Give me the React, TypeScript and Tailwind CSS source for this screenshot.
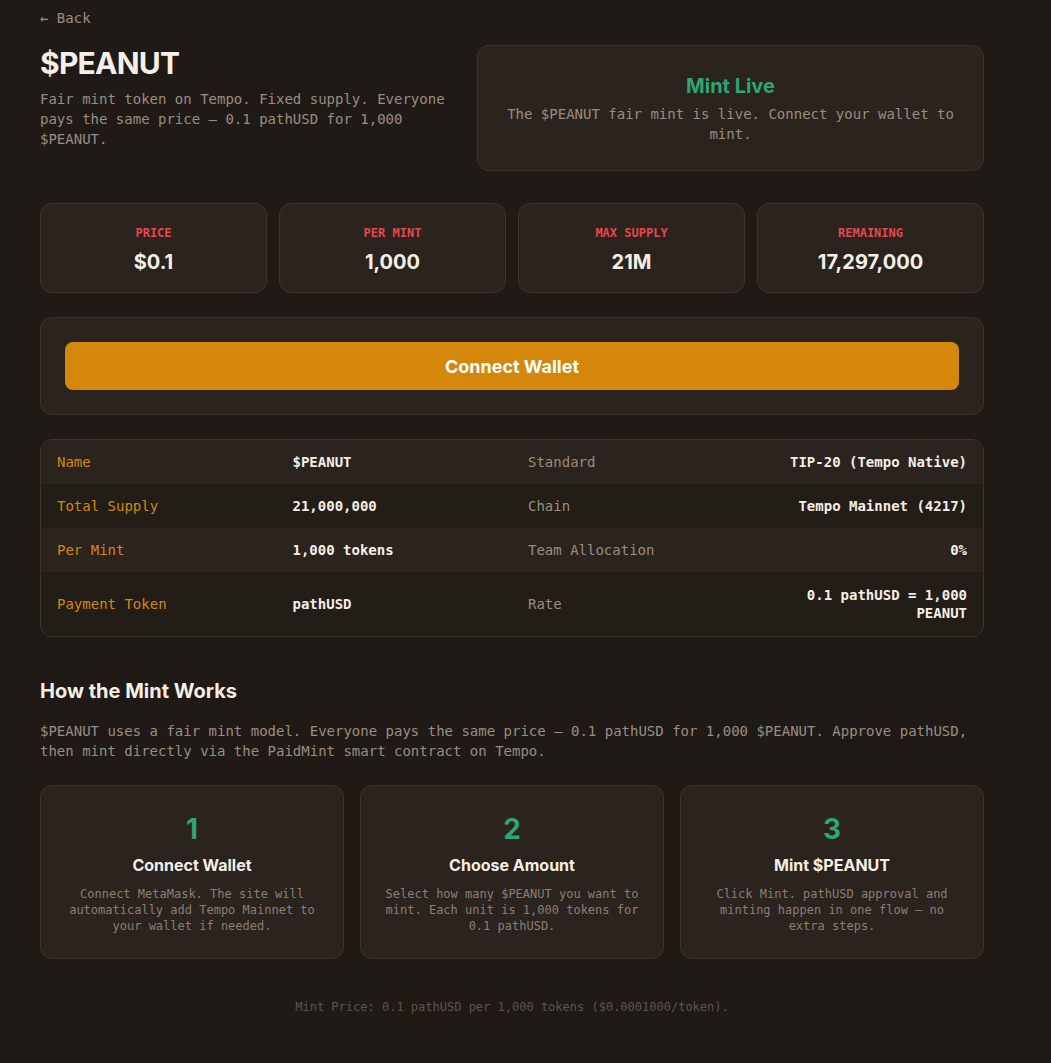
const mono = { fontFamily: '"DejaVu Sans Mono", "Liberation Mono", monospace' }

const stats = [
  { label: 'Price', value: '$0.1' },
  { label: 'Per Mint', value: '1,000' },
  { label: 'Max Supply', value: '21M' },
  { label: 'Remaining', value: '17,297,000' },
]

const rows = [
  { k1: 'Name', v1: '$PEANUT', k2: 'Standard', v2: 'TIP-20 (Tempo Native)' },
  { k1: 'Total Supply', v1: '21,000,000', k2: 'Chain', v2: 'Tempo Mainnet (4217)' },
  { k1: 'Per Mint', v1: '1,000 tokens', k2: 'Team Allocation', v2: '0%' },
  { k1: 'Payment Token', v1: 'pathUSD', k2: 'Rate', v2: '0.1 pathUSD = 1,000 PEANUT' },
]

const steps = [
  {
    n: '1',
    title: 'Connect Wallet',
    text: 'Connect MetaMask. The site will automatically add Tempo Mainnet to your wallet if needed.',
  },
  {
    n: '2',
    title: 'Choose Amount',
    text: 'Select how many $PEANUT you want to mint. Each unit is 1,000 tokens for 0.1 pathUSD.',
  },
  {
    n: '3',
    title: 'Mint $PEANUT',
    text: 'Click Mint. pathUSD approval and minting happen in one flow — no extra steps.',
  },
]

export default function App() {
  return (
    <div
      className="min-h-[1063px] w-full bg-[#1f1a16] text-[#f2ece4]"
      style={{ fontFamily: 'Inter, "Noto Sans", sans-serif' }}
    >
      <div className="w-[1024px] px-10 pt-[9px] pb-12">
        <a className="block text-[14px] leading-[18px] text-[#9a8d80]" style={mono}>
          ← Back
        </a>

        {/* Header */}
        <div className="mt-[18px] flex gap-8">
          <div className="w-[405px] shrink-0">
            <h1 className="text-[30px] font-bold leading-[36px] tracking-tight text-[#f5efe6]">$PEANUT</h1>
            <p className="mt-[8px] text-[14px] leading-[20px] text-[#9a8d80]" style={mono}>
              Fair mint token on Tempo. Fixed supply. Everyone pays the same price — 0.1 pathUSD for 1,000 $PEANUT.
            </p>
          </div>
          <div className="flex h-[126px] flex-1 flex-col items-center justify-center rounded-xl border border-[#3d352d] bg-[#2a231e] px-6 text-center">
            <div className="text-[20px] font-bold leading-[28px] text-[#2ea574]">Mint Live</div>
            <p className="mt-[4px] text-[14px] leading-[20px] text-[#9a8d80]" style={mono}>
              The $PEANUT fair mint is live. Connect your wallet to mint.
            </p>
          </div>
        </div>

        {/* Stats */}
        <div className="mt-[32px] grid grid-cols-4 gap-3">
          {stats.map((s) => (
            <div
              key={s.label}
              className="flex h-[90px] flex-col items-center rounded-xl border border-[#3d352d] bg-[#2a231e] pt-[21px]"
            >
              <div className="text-[12px] font-bold uppercase leading-[16px] text-[#e5484d]" style={mono}>
                {s.label}
              </div>
              <div className="mt-[7px] text-[20px] font-bold leading-[28px] text-[#f5efe6]">{s.value}</div>
            </div>
          ))}
        </div>

        {/* Connect */}
        <div className="mt-[24px] rounded-xl border border-[#3d352d] bg-[#2a231e] p-6">
          <button className="h-[48px] w-full rounded-lg bg-[#d4870b] text-[18px] font-bold text-white">
            Connect Wallet
          </button>
        </div>

        {/* Details table */}
        <div className="mt-[24px] overflow-hidden rounded-xl border border-[#3d352d]" style={mono}>
          {rows.map((r, i) => (
            <div
              key={r.k1}
              className={`grid grid-cols-4 items-center text-[14px] leading-[18px] ${
                i % 2 === 0 ? 'bg-[#2a231e]' : 'bg-[#231d18]'
              } ${i === 3 ? 'h-[64px]' : 'h-[44px]'}`}
            >
              <div className="px-4 text-[#d4870b]">{r.k1}</div>
              <div className="px-4 font-bold text-[#f5efe6]">{r.v1}</div>
              <div className="px-4 text-[#9a8d80]">{r.k2}</div>
              <div className="px-4 text-right font-bold text-[#f5efe6]">{r.v2}</div>
            </div>
          ))}
        </div>

        {/* How it works */}
        <h2 className="mt-[40px] text-[20px] font-bold leading-[28px] text-[#f5efe6]">How the Mint Works</h2>
        <p className="mt-[16px] text-[14px] leading-[20px] text-[#9a8d80]" style={mono}>
          $PEANUT uses a fair mint model. Everyone pays the same price — 0.1 pathUSD for 1,000 $PEANUT. Approve
          pathUSD, then mint directly via the PaidMint smart contract on Tempo.
        </p>

        <div className="mt-[24px] grid grid-cols-3 gap-4">
          {steps.map((s) => (
            <div
              key={s.n}
              className="flex h-[174px] flex-col items-center rounded-xl border border-[#3d352d] bg-[#2a231e] px-6 pt-[25px] text-center"
            >
              <div className="text-[28px] font-bold leading-[36px] text-[#2ea574]">{s.n}</div>
              <div className="mt-[6px] text-[16px] font-bold leading-[24px] text-[#f5efe6]">{s.title}</div>
              <p className="mt-[9px] text-[12px] leading-[16px] text-[#8c7f72]" style={mono}>
                {s.text}
              </p>
            </div>
          ))}
        </div>

        <p className="mt-[40px] text-center text-[12px] leading-[16px] text-[#5e544a]" style={mono}>
          Mint Price: 0.1 pathUSD per 1,000 tokens ($0.0001000/token).
        </p>
      </div>
    </div>
  )
}
